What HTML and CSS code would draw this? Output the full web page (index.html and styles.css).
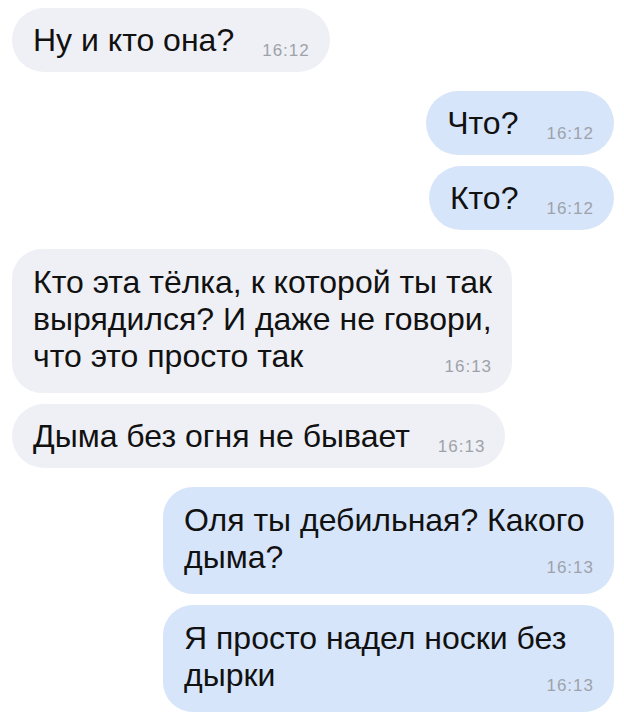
FILE: index.html
```html
<!DOCTYPE html>
<html lang="ru">
<head>
    <meta charset="UTF-8">
    <meta name="viewport" content="width=device-width, initial-scale=1.0">
    <title>Чат</title>
    <link rel="stylesheet" href="styles.css">
</head>
<body>
    <div id="chat">
        <!-- Входящее -->
        <div class="msg in">
            <div class="line last"><span>Ну и кто она?</span><span class="time">16:12</span></div>
        </div>

        <!-- Исходящие -->
        <div class="msg out group">
            <div class="line last"><span>Что?</span><span class="time">16:12</span></div>
        </div>
        <div class="msg out">
            <div class="line last"><span>Кто?</span><span class="time">16:12</span></div>
        </div>

        <div class="msg in group multi">
            <div class="line">Кто эта тёлка, к которой ты так</div>
            <div class="line">вырядился? И даже не говори,</div>
            <div class="line last"><span>что это просто так</span><span class="time">16:13</span></div>
        </div>
        <div class="msg in">
            <div class="line last"><span>Дыма без огня не бывает</span><span class="time">16:13</span></div>
        </div>

        <div class="msg out group multi wide">
            <div class="line">Оля ты дебильная? Какого</div>
            <div class="line last"><span>дыма?</span><span class="time">16:13</span></div>
        </div>
        <div class="msg out multi wide">
            <div class="line">Я просто надел носки без</div>
            <div class="line last"><span>дырки</span><span class="time">16:13</span></div>
        </div>
    </div>
</body>
</html>
```

FILE: styles.css
```css
body {
    margin: 0;
    background: #ffffff;
    font-family: "Liberation Sans", Arial, sans-serif;
    color: #111111;
}

#chat {
    display: flex;
    flex-direction: column;
    gap: 11px;
    padding: 8px 10px 8px 12px;
}

.msg {
    box-sizing: border-box;
    padding: 14px 20px 13px 21px;
    border-radius: 32px;
    font-size: 32px;
    line-height: 37px;
    white-space: nowrap;
}

.msg.in {
    align-self: flex-start;
    background: #eff0f5;
}

.msg.out {
    align-self: flex-end;
    background: #d7e5fa;
}

.msg.group {
    margin-top: 8px;
}

.msg.multi {
    border-radius: 30px;
    padding-top: 15px;
    padding-bottom: 18px;
}

.msg.wide {
    width: 451px;
}

.line.last {
    display: flex;
    align-items: flex-end;
    justify-content: space-between;
}

.time {
    margin-left: 28px;
    font-size: 17px;
    line-height: 17px;
    letter-spacing: 1px;
    color: #9da2aa;
}
```
